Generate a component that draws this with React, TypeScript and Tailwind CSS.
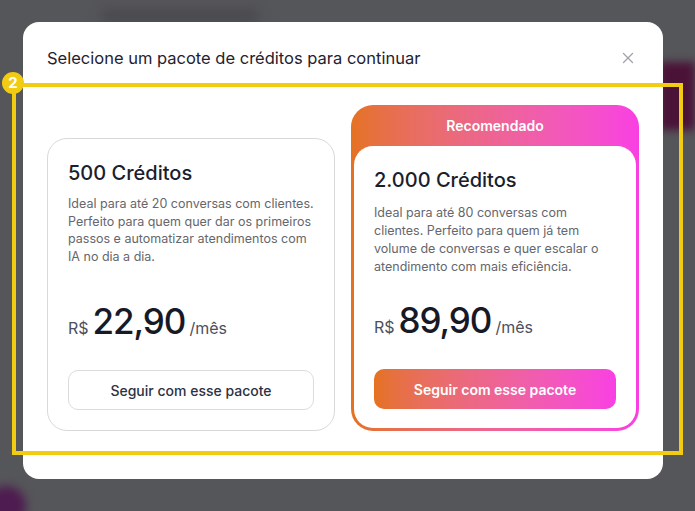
import { X } from 'lucide-react';

interface Plan {
  credits: string;
  description: string;
  price: string;
  featured?: boolean;
}

const plans: Plan[] = [
  {
    credits: '500 Créditos',
    description:
      'Ideal para até 20 conversas com clientes. Perfeito para quem quer dar os primeiros passos e automatizar atendimentos com IA no dia a dia.',
    price: '22,90',
  },
  {
    credits: '2.000 Créditos',
    description:
      'Ideal para até 80 conversas com clientes. Perfeito para quem já tem volume de conversas e quer escalar o atendimento com mais eficiência.',
    price: '89,90',
    featured: true,
  },
];

function PlanBody({ plan }: { plan: Plan }) {
  return (
    <>
      <h3 className="text-[20px] leading-7 font-medium text-[#1b1e2b]">{plan.credits}</h3>
      <p
        className={
          plan.featured
            ? 'mt-2.5 text-[12.5px] leading-[18px] text-[#66666c]'
            : 'mt-2 text-[12.5px] leading-[17.5px] text-[#66666c]'
        }
      >
        {plan.description}
      </p>
      <div className="mt-auto flex items-baseline gap-1">
        <span className="text-[16px] text-[#4b5060]">R$</span>
        <span className="text-[35px] leading-none font-medium tracking-[-0.03em] text-[#171a26]">
          {plan.price}
        </span>
        <span className="text-[16px] text-[#4b5060]">/mês</span>
      </div>
      {plan.featured ? (
        <button className="mt-[30px] h-10 w-full rounded-[10px] bg-gradient-to-r from-[#e5721f] to-[#f93fe3] text-[14px] font-semibold text-white">
          Seguir com esse pacote
        </button>
      ) : (
        <button className="mt-[30px] h-10 w-full rounded-[10px] border border-[#dcdcdc] bg-white text-[14px] font-medium text-[#2d3142]">
          Seguir com esse pacote
        </button>
      )}
    </>
  );
}

export default function App() {
  return (
    <div className="relative h-[511px] w-[695px] overflow-hidden bg-[#55565a] font-['Inter',sans-serif]">
      {/* blurred page behind the overlay */}
      <div className="absolute left-[100px] top-[10px] h-[13px] w-[160px] rounded-full bg-[#48494d] blur-[6px]" />
      <div className="absolute right-0 top-[62px] h-[68px] w-[36px] bg-[#4b1238] blur-[4px]" />
      <div className="absolute -left-[14px] top-[486px] h-[40px] w-[40px] rounded-full bg-[#4e1c50] blur-[5px]" />

      <div className="relative ml-[23px] mt-[22px] w-[640px] rounded-2xl bg-white px-6 pb-12 pt-6">
        <div className="flex h-6 items-center justify-between">
          <h2 className="text-[16.5px] text-[#1f2230]">Selecione um pacote de créditos para continuar</h2>
          <button className="mr-[2px] text-[#a1a1aa]">
            <X className="h-[18px] w-[18px]" strokeWidth={1.75} />
          </button>
        </div>

        <div className="mt-[35px] grid grid-cols-2 items-end gap-4">
          <div className="flex h-[293px] flex-col rounded-[20px] border border-[#d9d9d9] bg-white px-5 pb-5 pt-5">
            <PlanBody plan={plans[0]} />
          </div>

          <div className="flex h-[326px] flex-col rounded-[22px] bg-gradient-to-r from-[#e5721f] to-[#f93fe3] p-[3px] pt-0">
            <div className="flex h-[41px] items-center justify-center text-[14px] font-semibold text-white">
              Recomendado
            </div>
            <div className="flex flex-1 flex-col rounded-[19px] bg-white px-5 pb-[19px] pt-[20px]">
              <PlanBody plan={plans[1]} />
            </div>
          </div>
        </div>
      </div>

      {/* step marker */}
      <div className="absolute left-[12px] top-[83px] h-[372px] w-[671px] border-4 border-[#f2cc12]" />
      <div className="absolute left-[2px] top-[72px] flex h-[22px] w-[22px] items-center justify-center rounded-full bg-[#f2cc12] text-[15px] font-bold text-white">
        2
      </div>
    </div>
  );
}
